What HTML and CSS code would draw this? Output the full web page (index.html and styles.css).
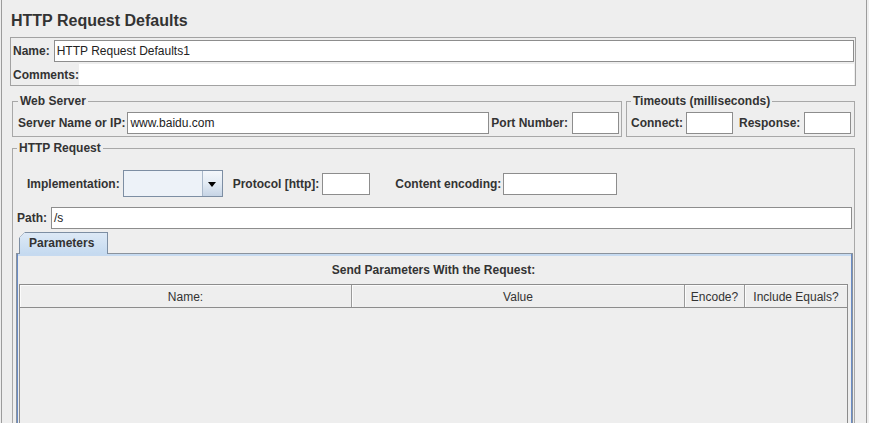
FILE: index.html
```html
<!DOCTYPE html>
<html>
<head>
<meta charset="utf-8">
<title>HTTP Request Defaults</title>
<link rel="stylesheet" href="styles.css">
</head>
<body>
<div class="win">
  <h1 class="title">HTTP Request Defaults</h1>

  <div class="namebox">
    <div class="row gap4">
      <span class="label">Name:</span>
      <div class="field grow">HTTP Request Defaults1</div>
    </div>
    <div class="row comments">
      <span class="label">Comments:</span>
      <div class="area grow"></div>
    </div>
  </div>

  <div class="servers">
    <fieldset class="group web">
      <legend>Web Server</legend>
      <div class="row">
        <span class="label">Server Name or IP:</span>
        <div class="field grow ml2">www.baidu.com</div>
        <span class="label ml2">Port Number:</span>
        <div class="field w47 ml4"></div>
      </div>
    </fieldset>
    <fieldset class="group timeouts">
      <legend>Timeouts (milliseconds)</legend>
      <div class="row">
        <span class="label">Connect:</span>
        <div class="field w47 ml3"></div>
        <span class="label ml6">Response:</span>
        <div class="field w47 ml4"></div>
      </div>
    </fieldset>
  </div>

  <fieldset class="group http">
    <legend>HTTP Request</legend>
    <div class="row impl">
      <span class="label">Implementation:</span>
      <div class="combo ml3">
        <div class="combo-text"></div>
        <div class="combo-btn"><span class="arrow"></span></div>
      </div>
      <span class="label ml10">Protocol [http]:</span>
      <div class="field w48 ml3"></div>
      <span class="label ml25">Content encoding:</span>
      <div class="field w114 ml2"></div>
    </div>
    <div class="row path">
      <span class="label">Path:</span>
      <div class="field grow ml4">/s</div>
    </div>

    <div class="tabs">
      <div class="tab">Parameters</div>
    </div>
    <div class="panel">
      <div class="caption">Send Parameters With the Request:</div>
      <div class="table">
        <div class="thead">
          <div class="th c1">Name:</div>
          <div class="th c2">Value</div>
          <div class="th c3">Encode?</div>
          <div class="th c4">Include Equals?</div>
        </div>
        <div class="tbody"></div>
      </div>
    </div>
  </fieldset>
</div>
</body>
</html>
```

FILE: styles.css
```css
* { box-sizing: border-box; }
html, body { margin: 0; padding: 0; }
body {
  background: #eeeeee;
  font-family: "Liberation Sans", Arial, sans-serif;
  font-size: 12px;
  color: #333333;
  overflow: hidden;
}
.win {
  margin-left: 1px;
  width: 866px;
  height: 423px;
  border-left: 1px solid #9c9c9c;
  border-right: 1px solid #9c9c9c;
  overflow: hidden;
}
.title {
  margin: 11px 0 0 9px;
  font-size: 16px;
  line-height: 20px;
  font-weight: bold;
  color: #333;
}
.row { display: flex; align-items: center; }
.grow { flex: 1 1 auto; min-width: 0; }
.gap4 { gap: 4px; }
.ml2 { margin-left: 2px; }
.ml3 { margin-left: 3px; }
.ml4 { margin-left: 4px; }
.ml6 { margin-left: 6px; }
.ml10 { margin-left: 10px; }
.ml25 { margin-left: 25px; }
.w47 { width: 47px; flex: none; }
.w48 { width: 48px; flex: none; }
.w114 { width: 114px; flex: none; }
.label { font-weight: bold; white-space: nowrap; line-height: 14px; }
.field {
  height: 22px;
  border: 1px solid #8d8d8d;
  background: #ffffff;
  padding: 0 2px;
  line-height: 20px;
  white-space: nowrap;
  overflow: hidden;
  color: #222;
}

/* name / comments box */
.namebox {
  margin: 6px 10px 0 8px;
  border: 1px solid #a2a2a2;
  padding: 2px 1px 0 2px;
}
.comments { margin-top: 2px; }
.area { height: 21px; background: #ffffff; }

/* group boxes */
.group {
  margin: 0;
  min-width: 0;
  border: 1px solid #a8a8a8;
}
.group legend {
  padding: 0 2px;
  font-weight: bold;
  line-height: 14px;
  color: #333;
}
.servers {
  display: flex;
  gap: 4px;
  margin: 8px 11px 0 10px;
}
.web { flex: 1 1 auto; padding: 4px 2px 2px 5px; }
.timeouts { flex: none; width: 229px; padding: 4px 3px 2px 4px; }

.http {
  margin: 4px 11px 0 10px;
  padding: 15px 2px 0 4px;
  height: 300px;
}
.impl { padding-left: 10px; height: 27px; }
.path { margin-top: 10px; }

/* combo box */
.combo {
  flex: none;
  display: flex;
  width: 100px;
  height: 27px;
  border: 1px solid #7d8ea3;
  background: #edf2f8;
}
.combo-text { flex: 1; }
.combo-btn {
  width: 20px;
  border-left: 1px solid #a9b8ca;
  background: linear-gradient(#f4f7fb, #e3ebf4 50%, #c6d4e5);
  display: flex;
  align-items: center;
  justify-content: center;
}
.arrow {
  width: 0;
  height: 0;
  border-left: 4px solid transparent;
  border-right: 4px solid transparent;
  border-top: 5px solid #000;
  margin-top: 1px;
}

/* tabs */
.tabs {
  display: flex;
  margin-top: 3px;
  padding-left: 2px;
  position: relative;
  z-index: 1;
}
.tab {
  width: 89px;
  height: 22px;
  margin-bottom: -1px;
  padding-left: 9px;
  border: 1px solid #7d8ea3;
  border-bottom: none;
  background:
    linear-gradient(135deg, transparent 3.6px, #7d8ea3 3.6px, #7d8ea3 4.8px, transparent 4.8px) border-box,
    linear-gradient(#dde9f6, #c5daf0) padding-box;
  clip-path: polygon(0 6px, 6px 0, 100% 0, 100% 100%, 0 100%);
  font-weight: bold;
  line-height: 20px;
  color: #333;
}
.panel {
  margin: 0 -1px;
  border: 1px solid #8a929c;
  border-bottom: none;
  box-shadow: inset 1px 0 0 #6b8dc6, inset -1px 0 0 #6b8dc6, inset 0 2px 0 #c6daf0;
  padding: 0 4px 0 2px;
  height: 200px;
}
.caption {
  padding: 9px 0 7px;
  line-height: 14px;
  font-weight: bold;
  text-align: center;
  color: #333;
}
.table { border: 1px solid #8c8c8c; }
.thead {
  display: grid;
  grid-template-columns: 332px 333px 60px 1fr;
  border-bottom: 1px solid #8c8c8c;
}
.th {
  padding-top: 2px;
  line-height: 20px;
  text-align: center;
  border-right: 1px solid #9a9a9a;
  color: #333;
  white-space: nowrap;
  box-shadow: inset 1px 1px 0 #fbfbfb;
}
.th.c4 { border-right: none; }
.tbody { height: 150px; background: #eeeeee; }
```
